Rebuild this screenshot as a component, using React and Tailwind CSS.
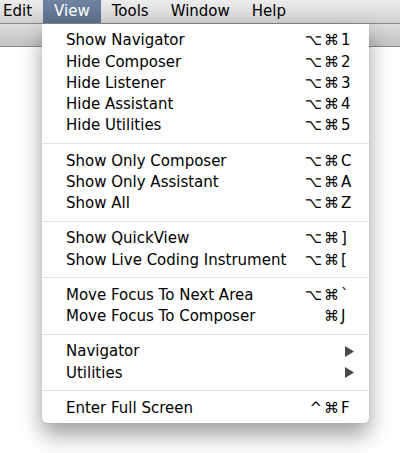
import React from 'react';

const groups = [
  [
    ['Show Navigator', '⌥⌘', '1'],
    ['Hide Composer', '⌥⌘', '2'],
    ['Hide Listener', '⌥⌘', '3'],
    ['Hide Assistant', '⌥⌘', '4'],
    ['Hide Utilities', '⌥⌘', '5'],
  ],
  [
    ['Show Only Composer', '⌥⌘', 'C'],
    ['Show Only Assistant', '⌥⌘', 'A'],
    ['Show All', '⌥⌘', 'Z'],
  ],
  [
    ['Show QuickView', '⌥⌘', ']'],
    ['Show Live Coding Instrument', '⌥⌘', '['],
  ],
  [
    ['Move Focus To Next Area', '⌥⌘', '`'],
    ['Move Focus To Composer', '⌘', 'J'],
  ],
  [
    ['Navigator', null, 'submenu'],
    ['Utilities', null, 'submenu'],
  ],
  [['Enter Full Screen', '^⌘', 'F']],
];

const menus = ['Edit', 'View', 'Tools', 'Window', 'Help'];

function Arrow() {
  return (
    <svg width="9" height="11" viewBox="0 0 9 11" className="ml-[4px]">
      <polygon points="0,0 9,5.5 0,11" fill="#4a4a4a" />
    </svg>
  );
}

function Row({ label, mods, keyChar }) {
  return (
    <div className="h-[21.25px] flex items-center pl-[24px] text-black">
      <span className="flex-1">{label}</span>
      {keyChar === 'submenu' ? (
        <span className="w-[28px] flex items-center">
          <Arrow />
        </span>
      ) : (
        <>
          <span className="text-right tracking-[2px]">{mods}</span>
          <span className="w-[28px]">{keyChar}</span>
        </>
      )}
    </div>
  );
}

export default function App() {
  return (
    <div
      className="relative w-[400px] h-[453px] bg-white overflow-hidden text-[15px]"
      style={{ fontFamily: '"DejaVu Sans", "Liberation Sans", sans-serif' }}
    >
      <div className="h-[24px] flex items-stretch bg-gradient-to-b from-[#ededed] to-[#cfcfcf] border-b border-[#8a8a8a] ml-[-8px] text-black">
        {menus.map((m) => (
          <div
            key={m}
            className={
              m === 'View'
                ? 'px-[11px] flex items-center bg-gradient-to-b from-[#6f83a0] to-[#5b6f8c] text-white'
                : 'px-[11px] flex items-center'
            }
          >
            {m}
          </div>
        ))}
      </div>
      <div className="h-[23px] bg-gradient-to-b from-[#dcdcdc] to-[#c3c3c3] border-b border-[#8a8a8a]" />

      <div className="absolute left-[42px] top-[24px] w-[327px] bg-white rounded-b-[5px] pt-[6px] pb-[4px] shadow-[0_12px_22px_rgba(0,0,0,0.38),0_0_1px_rgba(0,0,0,0.3)]">
        {groups.map((g, gi) => (
          <div key={gi}>
            {gi > 0 && (
              <div className="h-[14px] flex items-center">
                <div className="w-full h-px bg-[#e3e3e3]" />
              </div>
            )}
            {g.map(([label, mods, keyChar]) => (
              <Row key={label} label={label} mods={mods} keyChar={keyChar} />
            ))}
          </div>
        ))}
      </div>
    </div>
  );
}
